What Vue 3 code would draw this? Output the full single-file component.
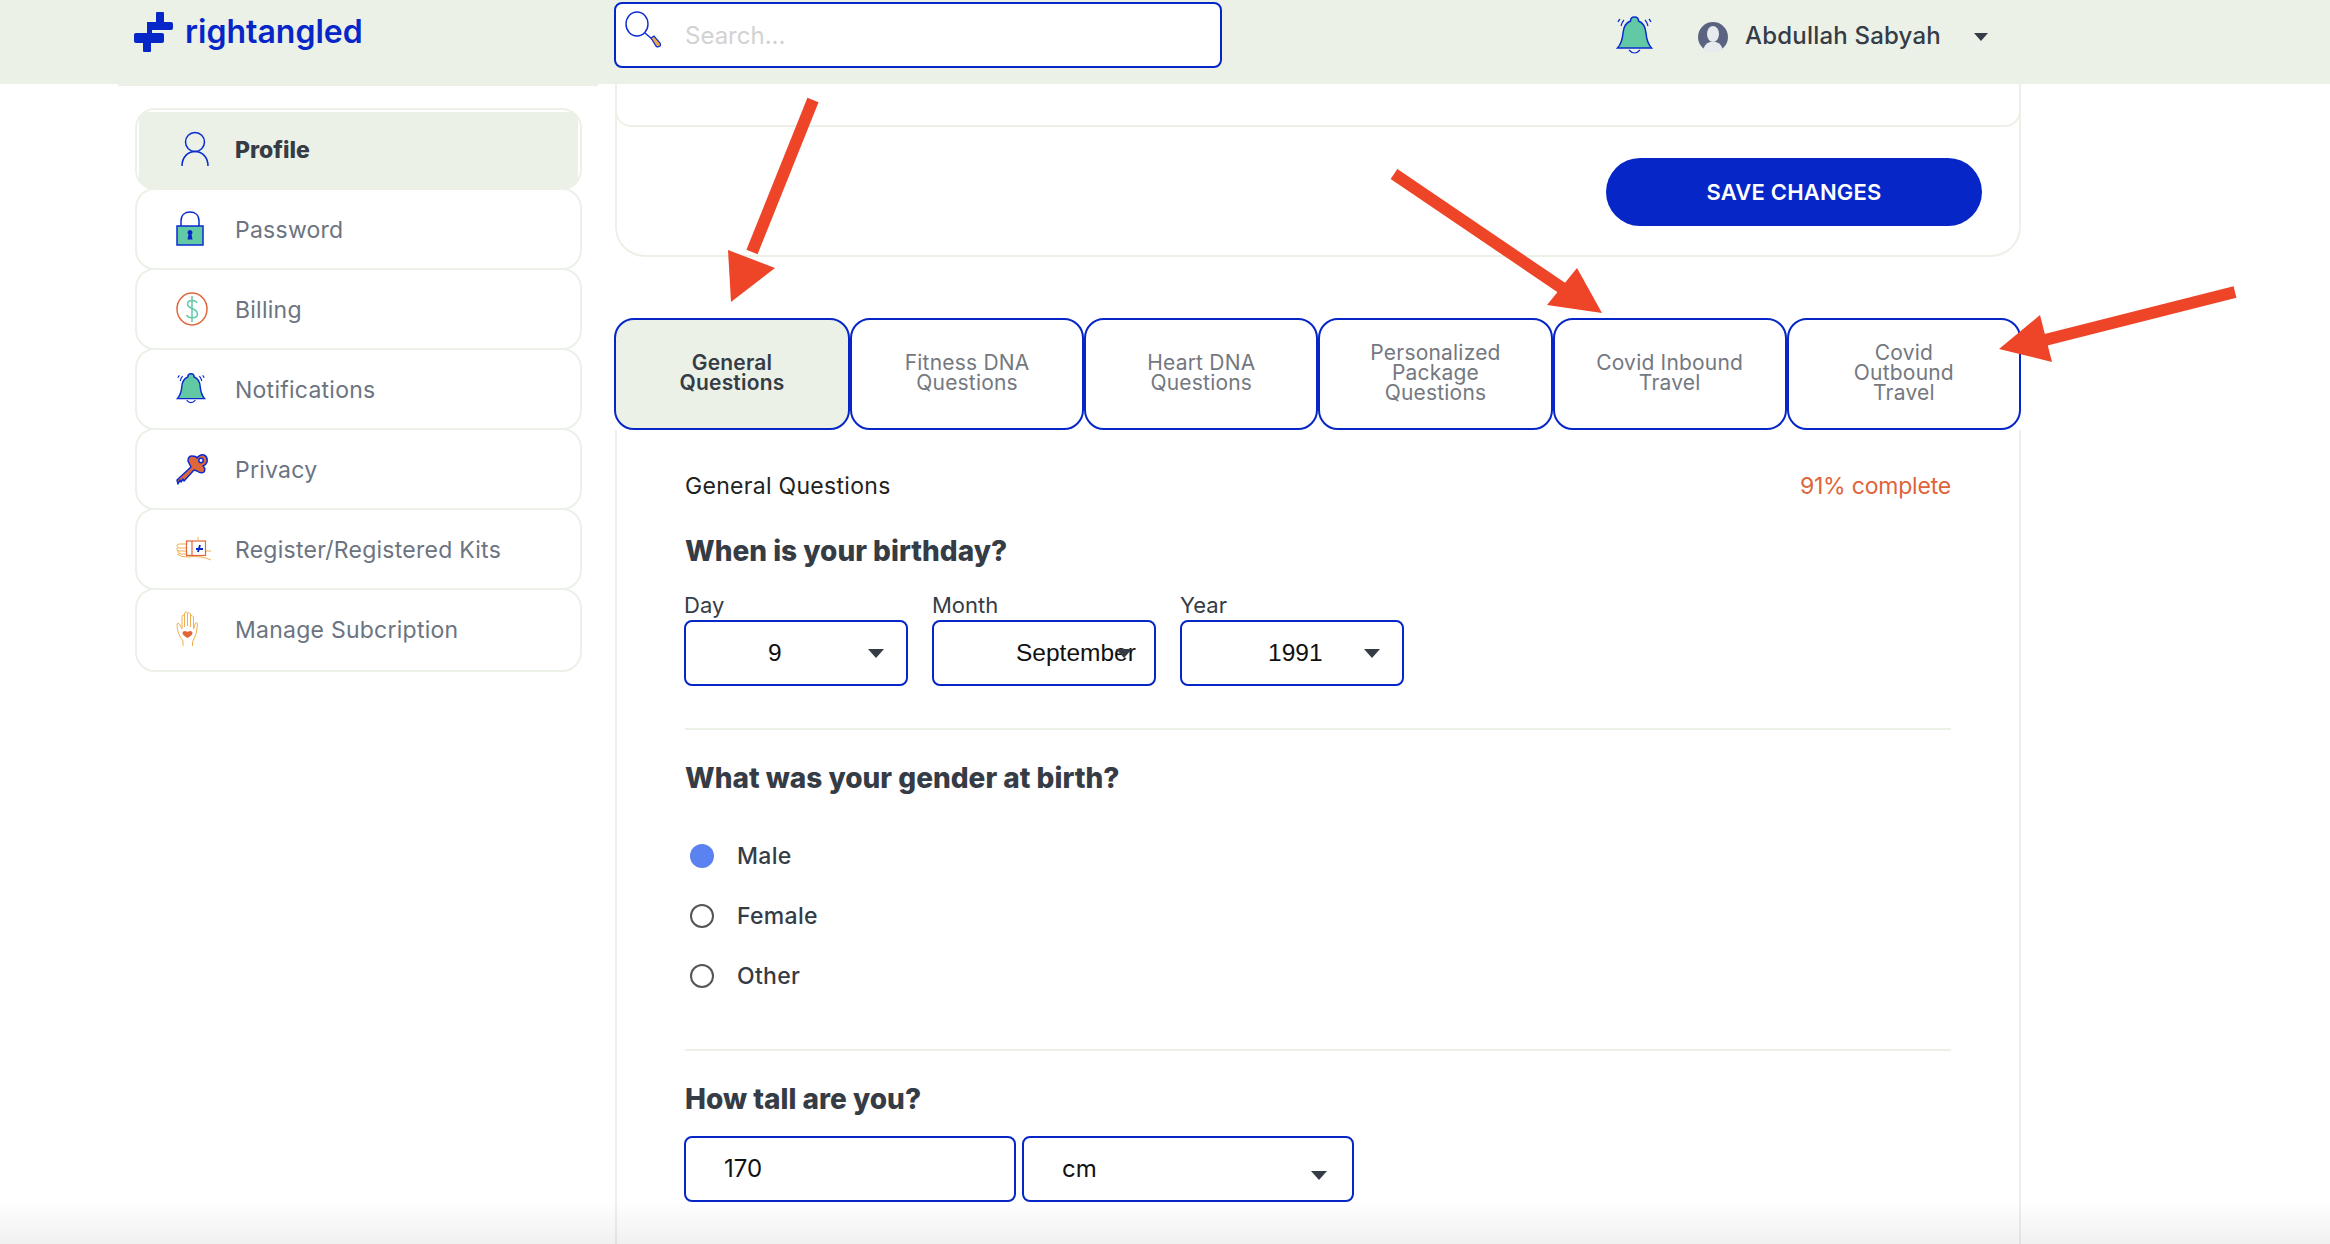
<script setup>
const menu = [
  { label: 'Profile', icon: 'profile', active: true },
  { label: 'Password', icon: 'lock' },
  { label: 'Billing', icon: 'billing' },
  { label: 'Notifications', icon: 'bell' },
  { label: 'Privacy', icon: 'key' },
  { label: 'Register/Registered Kits', icon: 'kit' },
  { label: 'Manage Subcription', icon: 'hand' },
];

const tabs = [
  { lines: ['General', 'Questions'], active: true },
  { lines: ['Fitness DNA', 'Questions'] },
  { lines: ['Heart DNA', 'Questions'] },
  { lines: ['Personalized', 'Package', 'Questions'] },
  { lines: ['Covid Inbound', 'Travel'] },
  { lines: ['Covid', 'Outbound', 'Travel'] },
];

const birthday = [
  { label: 'Day', value: '9' },
  { label: 'Month', value: 'September' },
  { label: 'Year', value: '1991', wide: true },
];

const genders = [
  { label: 'Male', checked: true },
  { label: 'Female' },
  { label: 'Other' },
];
</script>

<template>
  <div class="page">
    <header class="topbar">
      <div class="logo">
        <svg class="logo-mark" width="39" height="40" viewBox="0 0 39 40" fill="#0626c8">
          <rect x="22" y="0" width="8" height="12" rx="1" />
          <rect x="13" y="10" width="26" height="8" rx="2" />
          <rect x="13" y="10" width="5" height="14" />
          <rect x="0" y="21" width="30" height="10" rx="2" />
          <rect x="9" y="29" width="8" height="11" rx="1" />
        </svg>
        <span class="logo-name">rightangled</span>
      </div>

      <div class="search">
        <svg class="search-icon" width="36" height="40" viewBox="0 0 36 40" fill="none">
          <ellipse cx="12" cy="13" rx="11" ry="12" stroke="#0b2bd0" stroke-width="1.4" />
          <path d="M20 22l7 6" stroke="#0b2bd0" stroke-width="1.4" />
          <path d="M26 27l3-2 6 7q1 2 0 3l-2 1q-1 0-2-1z" fill="#eda94e" stroke="#0b2bd0" stroke-width="1.2" />
        </svg>
        <span class="search-text">Search...</span>
      </div>

      <svg class="top-bell" width="37" height="40" viewBox="0 0 37 40" fill="none">
        <path d="M18.5 1c-3 0-4 2-4 4-5 2-7 6-7.500 12-.5 7-2 11-5.500 15h34c-3.500-4-5-8-5.500-15-.5-6-2.500-10-7.500-12 0-2-1-4-4-4z" fill="#62c9a5" stroke="#0b2bd0" stroke-width="1.500" />
        <path d="M13 34q5.500 6 11 0M5 10q1-4 3-6M2 6q1-2 2-3M32 10q-1-4-3-6M35 6q-1-2-2-3" stroke="#0b2bd0" stroke-width="1.200" />
      </svg>

      <svg class="avatar" width="30" height="30" viewBox="0 0 30 30">
        <circle cx="15" cy="15" r="15" fill="#5a6480" />
        <ellipse cx="15" cy="12" rx="6" ry="8" fill="#e8ebee" />
        <path d="M5 29q1-7 7-9h6q6 2 7 9q-10 3-20 0z" fill="#e8ebee" />
      </svg>
      <span class="user-name">Abdullah Sabyah</span>
      <span class="caret"></span>
    </header>

    <div class="body">
      <aside class="sidebar">
        <div class="side-strip"></div>
        <nav class="menu">
          <div v-for="item in menu" :key="item.label" class="menu-item" :class="{ active: item.active }">
            <span class="menu-icon">
              <svg v-if="item.icon === 'profile'" width="28" height="36" viewBox="0 0 28 36" fill="none" class="icon-profile">
                <circle cx="14" cy="11" r="9.500" stroke="#0b2bd0" stroke-width="1.500" />
                <path d="M1 35c0-9 6-14.500 13-14.500S27 26 27 35" stroke="#0b2bd0" stroke-width="1.500" />
              </svg>
              <svg v-else-if="item.icon === 'lock'" width="28" height="35" viewBox="0 0 28 35">
                <path d="M5 15V10C5 4 9 1 14 1s9 3 9 9v5" fill="none" stroke="#0b2bd0" stroke-width="1.500" />
                <rect x="1" y="15" width="26" height="19" fill="#62c9a5" stroke="#0b2bd0" stroke-width="1.500" />
                <path d="M14 19a2.500 2.500 0 0 1 1.500 4.500l1 5h-5l1-5A2.500 2.500 0 0 1 14 19z" fill="#0626c8" />
              </svg>
              <svg v-else-if="item.icon === 'billing'" width="32" height="34" viewBox="0 0 32 34" fill="none">
                <ellipse cx="16" cy="17" rx="15" ry="16" stroke="#e0663a" stroke-width="1.500" />
                <path d="M21 11c-1-3-9-4-9.500 1-.5 5 10 4 10 10 0 5-9 5-11 1M16 4v26" stroke="#62c9a5" stroke-width="1.500" />
              </svg>
              <svg v-else-if="item.icon === 'bell'" width="30" height="32" viewBox="0 0 37 40" fill="none">
                <path d="M18.500 1c-3 0-4 2-4 4-5 2-7 6-7.500 12-.5 7-2 11-5.500 15h34c-3.500-4-5-8-5.500-15-.5-6-2.500-10-7.500-12 0-2-1-4-4-4z" fill="#62c9a5" stroke="#0b2bd0" stroke-width="1.800" />
                <path d="M13 34q5.500 6 11 0M5 10q1-4 3-6M2 6q1-2 2-3M32 10q-1-4-3-6M35 6q-1-2-2-3" stroke="#0b2bd0" stroke-width="1.400" />
              </svg>
              <svg v-else-if="item.icon === 'key'" width="32" height="32" viewBox="0 0 32 32">
                <path d="M2 31L1 27 15 14 12 8q0-5 4-5 4 0 5 2 3-4 7-3 4 2 3 7-1 3-4 4 3 3 1 6-3 2-7-1l-3-1L8 28l-1-2-2 3-1-2z" fill="#e0663a" stroke="#0b2bd0" stroke-width="1.500" stroke-linejoin="round" />
                <circle cx="25" cy="7.500" r="2.200" fill="#fff" stroke="#0b2bd0" stroke-width="1.500" />
              </svg>
              <svg v-else-if="item.icon === 'kit'" width="36" height="25" viewBox="0 0 36 25" fill="none">
                <path d="M10 8H3q-2 0-2 2t2 2h7M1 12q-1 3 2 3h7M2 15q0 3 3 3h5M1 18q4 3 10 3 8-1 14 0 6 1 10 3M30 15h5" stroke="#f0b050" stroke-width="1" />
                <rect x="10.500" y="5" width="19" height="14.500" stroke="#e0663a" stroke-width="1.200" />
                <path d="M16 5v14.500" stroke="#e0663a" stroke-width="1.200" />
                <path d="M22 1v4" stroke="#f0b050" stroke-width="1" />
                <path d="M20 13h7M24 9l-2 7" stroke="#0626c8" stroke-width="1.800" />
              </svg>
              <svg v-else width="23" height="37" viewBox="0 0 23 37" fill="none">
                <path d="M7 36v-5Q1 24 1 14q1-2 2.500 0L6 19V6q1-2 2.500 0V3q1.500-2.500 3 0 2-1 3 1v2q1.500-1.500 3 1v12l2-6q1.500-1 2 1 0 10-5 18v4" stroke="#f0b050" stroke-width="1" />
                <path d="M8.500 6v11M11.500 3v13M14.500 4v13" stroke="#f0b050" stroke-width="1" />
                <path d="M11.500 28c-3-2-5-3-5-5s3-3 5-1c2-2 5-1 5 1s-2 3-5 5z" fill="#e0663a" />
              </svg>
            </span>
            <span class="menu-label">{{ item.label }}</span>
          </div>
        </nav>
      </aside>

      <main class="main">
        <section class="save-card">
          <div class="inner-card"></div>
          <div class="save-row">
            <button class="save-btn">SAVE CHANGES</button>
          </div>
        </section>

        <div class="tabs">
          <div v-for="tab in tabs" :key="tab.lines[0]" class="tab" :class="{ active: tab.active }">
            <span v-for="line in tab.lines" :key="line">{{ line }}</span>
          </div>
        </div>

        <section class="form">
          <div class="form-head">
            <span class="form-title">General Questions</span>
            <span class="form-progress">91% complete</span>
          </div>

          <h2 class="question q-birthday">When is your birthday?</h2>
          <div class="birthday">
            <div v-for="part in birthday" :key="part.label" class="field">
              <label class="field-label">{{ part.label }}</label>
              <div class="select" :class="{ wide: part.wide }">
                {{ part.value }}
                <span class="select-arrow"></span>
              </div>
            </div>
          </div>
          <hr class="divider" />

          <h2 class="question q-gender">What was your gender at birth?</h2>
          <div class="genders">
            <div v-for="g in genders" :key="g.label" class="gender">
              <span class="radio" :class="{ checked: g.checked }"></span>
              <span class="gender-label">{{ g.label }}</span>
            </div>
          </div>
          <hr class="divider" />

          <h2 class="question q-height">How tall are you?</h2>
          <div class="height">
            <div class="box box-value">170</div>
            <div class="box box-unit">
              cm
              <span class="select-arrow low"></span>
            </div>
          </div>
        </section>
      </main>
    </div>

    <div class="bottom-fade"></div>

    <svg class="arrows" width="2330" height="1244" viewBox="0 0 2330 1244">
      <g fill="#ee4427" stroke="none">
        <path d="M813 100L752 252" stroke="#ee4427" stroke-width="12" />
        <polygon points="731,302 728,250 775,268" />
        <path d="M1394 174L1565 290" stroke="#ee4427" stroke-width="12" />
        <polygon points="1602,313 1547,305 1577,268" />
        <path d="M2235 292L2045 340" stroke="#ee4427" stroke-width="12" />
        <polygon points="1999,349 2040,315 2052,362" />
      </g>
    </svg>
  </div>
</template>

<style>
html,
body {
  margin: 0;
  background: #fff;
  overflow: hidden;
}
</style>

<style scoped>
.page {
  position: relative;
  width: 2330px;
  height: 1244px;
  overflow: hidden;
  font-family: Inter, "Liberation Sans", sans-serif;
  color: #353c45;
}

.topbar {
  display: flex;
  align-items: flex-start;
  height: 84px;
  padding-left: 134px;
  box-sizing: border-box;
  background: #ecf1e8;
}

.logo {
  display: flex;
  align-items: flex-start;
  width: 480px;
  padding-top: 12px;
  box-sizing: border-box;
}

.logo-name {
  margin-left: 12px;
  font-size: 32px;
  line-height: 40px;
  font-weight: 600;
  color: #0626c8;
}

.search {
  display: flex;
  align-items: center;
  width: 608px;
  height: 66px;
  margin-top: 2px;
  padding-left: 9px;
  box-sizing: border-box;
  border: 2px solid #0626c8;
  border-radius: 8px;
  background: #fff;
}

.search-icon {
  margin-top: -9px;
}

.search-text {
  margin-left: 24px;
  margin-top: 1px;
  font-size: 24px;
  color: #d2d2d2;
}

.top-bell {
  margin: 16px 0 0 394px;
}

.avatar {
  margin: 22px 0 0 45px;
}

.user-name {
  margin: 21px 0 0 17px;
  font-size: 24px;
  line-height: 30px;
  font-weight: 500;
  letter-spacing: 0.2px;
}

.caret {
  width: 0;
  height: 0;
  margin: 33px 0 0 33px;
  border-left: 7px solid transparent;
  border-right: 7px solid transparent;
  border-top: 8px solid #353c45;
}

.body {
  display: flex;
  padding-left: 118px;
}

.sidebar {
  width: 480px;
  flex: none;
}

.side-strip {
  height: 2px;
  background: #ecf1e8;
}

.menu {
  padding: 22px 16px 0 17px;
}

.menu-item {
  display: flex;
  align-items: center;
  height: 82px;
  margin-bottom: -2px;
  padding: 2px 0 0 39px;
  box-sizing: border-box;
  border: 2px solid #ecf1e8;
  border-radius: 20px;
  font-size: 23px;
  letter-spacing: 0.25px;
  color: #6b7480;
}

.menu-item:last-child {
  height: 84px;
  padding-bottom: 2px;
}

.menu-item.active {
  font-weight: 800;
  letter-spacing: 0;
  color: #353c45;
  background: linear-gradient(#ecf1e8, #ecf1e8) no-repeat 2px 2px / calc(100% - 4px) 100%;
}

.menu-icon {
  display: flex;
  align-items: center;
  width: 59px;
  flex: none;
  margin-top: -3px;
}

.icon-profile {
  margin-left: 5px;
}

.main {
  width: 1406px;
  margin-left: 17px;
  flex: none;
}

.save-card {
  box-sizing: border-box;
  height: 173px;
  border: 2px solid #ecf1e8;
  border-top: 0;
  border-radius: 0 0 30px 30px;
}

.inner-card {
  height: 41px;
  margin: 0 -2px;
  border: 2px solid #ecf1e8;
  border-top: 0;
  border-radius: 0 0 16px 16px;
}

.save-row {
  display: flex;
  justify-content: flex-end;
  padding: 31px 37px 0 0;
}

.save-btn {
  width: 376px;
  height: 68px;
  border: 0;
  border-radius: 34px;
  background: #0626c8;
  color: #fff;
  font-family: Inter, "Liberation Sans", sans-serif;
  font-size: 22px;
  font-weight: 600;
  letter-spacing: 0.2px;
}

.tabs {
  display: grid;
  grid-template-columns: 236px repeat(5, 1fr);
  margin: 61px 0 0 -1px;
}

.tab {
  display: flex;
  flex-direction: column;
  align-items: center;
  justify-content: center;
  height: 112px;
  padding-bottom: 3px;
  box-sizing: border-box;
  border: 2px solid #0626c8;
  border-radius: 20px;
  font-size: 21px;
  line-height: 20px;
  letter-spacing: 0.2px;
  color: #74787f;
  text-align: center;
}

.tab.active {
  background: #ecf1e8;
  color: #353c45;
  font-weight: 600;
}

.form {
  height: 820px;
  box-sizing: border-box;
  padding: 0 68px;
  border: solid #ecf1e8;
  border-width: 0 2px;
}

.form-head {
  display: flex;
  justify-content: space-between;
  padding-top: 42px;
  font-size: 23px;
  line-height: 28px;
}

.form-title {
  color: #222;
  letter-spacing: 0.3px;
}

.form-progress {
  color: #e0633a;
  letter-spacing: -0.2px;
}

.question {
  margin: 0;
  font-size: 28px;
  line-height: 34px;
  font-weight: 800;
  color: #353c45;
}

.q-birthday {
  margin-top: 34px;
}

.birthday {
  display: flex;
  gap: 24px;
  margin: 23px 0 0 -1px;
}

.field {
  width: 224px;
}

.field-label {
  display: block;
  font-size: 22px;
  line-height: 28px;
  color: #353c45;
}

.select {
  position: relative;
  height: 66px;
  box-sizing: border-box;
  margin-top: 1px;
  padding-left: 82px;
  border: 2px solid #0626c8;
  border-radius: 8px;
  font-family: "Liberation Sans", Arial, sans-serif;
  font-size: 24.500px;
  line-height: 62px;
  color: #111;
}

.select.wide {
  padding-left: 86px;
}

.select-arrow {
  position: absolute;
  top: 27px;
  right: 22px;
  width: 0;
  height: 0;
  border-left: 8px solid transparent;
  border-right: 8px solid transparent;
  border-top: 9px solid #353c45;
}

.select-arrow.low {
  top: 33px;
  right: 25px;
}

.divider {
  height: 2px;
  margin: 42px 0 0;
  border: 0;
  background: #ecf1e8;
}

.q-gender {
  margin-top: 31px;
}

.genders {
  display: flex;
  flex-direction: column;
  margin-top: 31px;
}

.gender {
  display: flex;
  align-items: center;
  height: 60px;
  font-size: 23px;
  font-weight: 500;
  letter-spacing: 0.3px;
}

.radio {
  width: 24px;
  height: 24px;
  box-sizing: border-box;
  margin-left: 5px;
  border: 2px solid #555;
  border-radius: 50%;
}

.radio.checked {
  border: 0;
  background: #5a82f0;
}

.gender-label {
  margin-left: 23px;
}

.genders + .divider {
  margin-top: 43px;
}

.q-height {
  margin-top: 31px;
}

.height {
  display: flex;
  gap: 6px;
  margin: 20px 0 0 -1px;
}

.box {
  position: relative;
  width: 332px;
  height: 66px;
  box-sizing: border-box;
  padding-left: 38px;
  border: 2px solid #0626c8;
  border-radius: 8px;
  font-size: 24px;
  line-height: 62px;
  color: #111;
}

.bottom-fade {
  position: absolute;
  left: 0;
  right: 0;
  bottom: 0;
  height: 44px;
  background: linear-gradient(rgba(0, 0, 0, 0), rgba(0, 0, 0, 0.06));
  pointer-events: none;
}

.arrows {
  position: absolute;
  top: 0;
  left: 0;
  pointer-events: none;
}
</style>
